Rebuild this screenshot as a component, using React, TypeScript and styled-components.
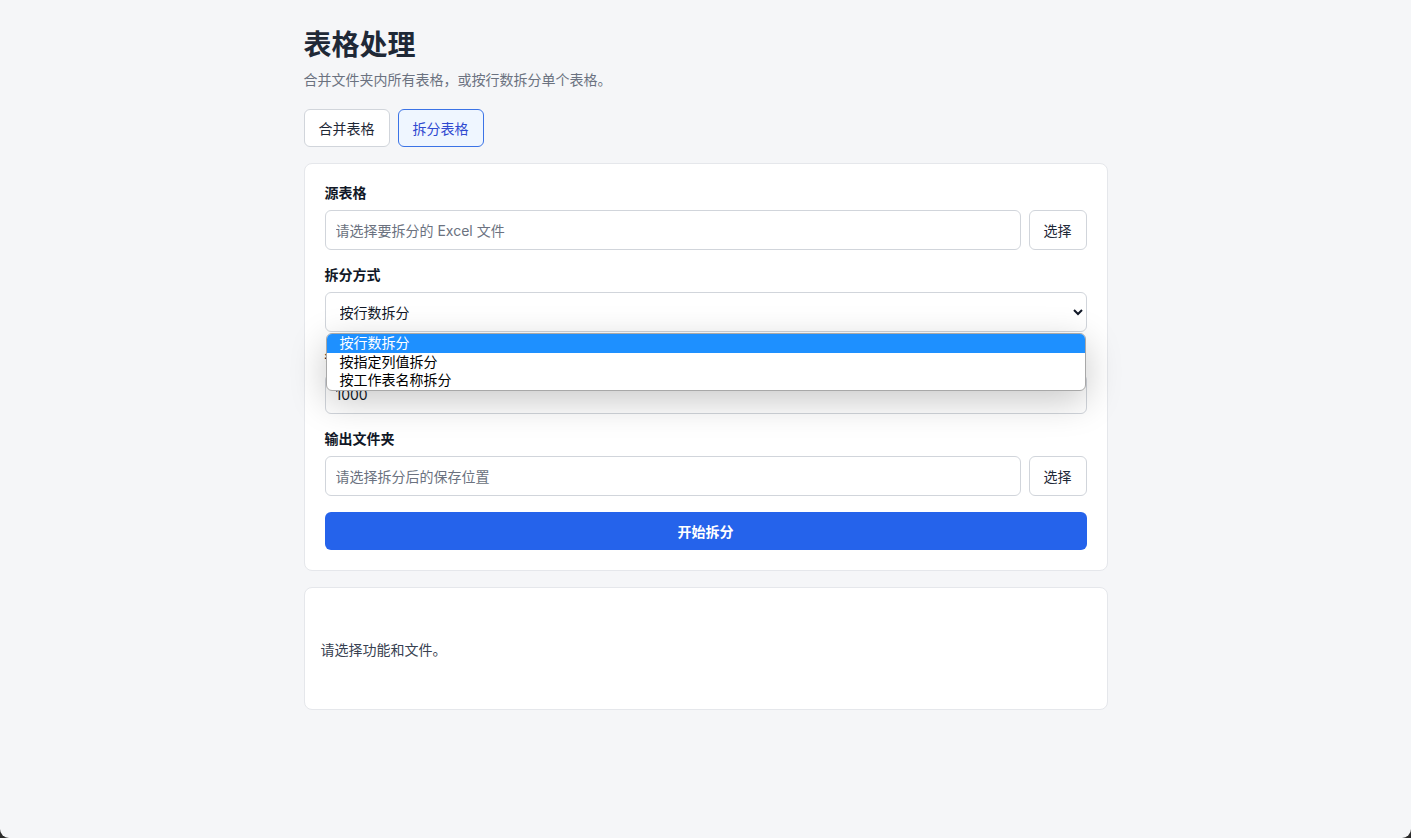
import { FC } from "react"
import styled, { createGlobalStyle } from "styled-components"

const GlobalStyle = createGlobalStyle`
  html {
    background: #2b2b2b;
  }
  body {
    margin: 0;
    font-family: "Inter", "Noto Sans CJK SC", sans-serif;
    color: #1f2937;
  }
  * {
    box-sizing: border-box;
  }
`

const Page = styled.div`
  min-height: 100vh;
  background: #f5f6f8;
  border-radius: 0 0 9px 9px;
  padding: 28px 0 40px;
`

const Container = styled.main`
  width: 804px;
  margin: 0 auto;
  display: flex;
  flex-direction: column;
`

const Title = styled.h1`
  margin: 0;
  font-size: 28px;
  line-height: 34px;
  font-weight: 700;
  color: #1f2937;
`

const Subtitle = styled.p`
  margin: 8px 0 0;
  font-size: 14px;
  line-height: 20px;
  color: #6b7280;
`

const Tabs = styled.div`
  display: flex;
  gap: 8px;
  margin-top: 19px;
`

const Tab = styled.button<{ $active?: boolean }>`
  height: 38px;
  padding: 0 14px;
  font: inherit;
  font-size: 14px;
  border-radius: 6px;
  cursor: pointer;
  border: 1px solid ${({ $active }) => ($active ? "#3b73e6" : "#d1d5db")};
  background: ${({ $active }) => ($active ? "#eff6ff" : "#ffffff")};
  color: ${({ $active }) => ($active ? "#2f49d0" : "#1f2937")};
`

const Card = styled.section`
  margin-top: 16px;
  background: #ffffff;
  border: 1px solid #e5e7eb;
  border-radius: 8px;
  padding: 20px;
  display: flex;
  flex-direction: column;
  gap: 16px;
`

const Field = styled.div`
  display: flex;
  flex-direction: column;
  gap: 8px;
`

const Label = styled.label`
  font-size: 14px;
  line-height: 18px;
  font-weight: 700;
  color: #111827;
`

const Row = styled.div`
  display: flex;
  gap: 8px;
`

const TextInput = styled.input`
  flex: 1;
  min-width: 0;
  height: 40px;
  padding: 0 10px;
  font: inherit;
  font-size: 14px;
  color: #111827;
  border: 1px solid #d1d5db;
  border-radius: 6px;
  background: #ffffff;
  outline: none;

  &::placeholder {
    color: #6b7280;
  }
`

const PickButton = styled.button`
  width: 58px;
  height: 40px;
  font: inherit;
  font-size: 14px;
  color: #1f2937;
  background: #ffffff;
  border: 1px solid #d1d5db;
  border-radius: 6px;
  cursor: pointer;
`

const SelectWrap = styled.div`
  position: relative;
`

const Select = styled.select`
  width: 100%;
  height: 40px;
  padding: 0 10px;
  font: inherit;
  font-size: 14px;
  color: #111827;
  background: #ffffff;
  border: 1px solid #d1d5db;
  border-radius: 6px;
  outline: none;
`

// open option list of the split-mode picker
const OptionList = styled.ul`
  position: absolute;
  top: calc(100% + 1px);
  left: 1px;
  right: 1px;
  margin: 0;
  padding: 0;
  list-style: none;
  background: #ffffff;
  border: 1px solid #a8a8a8;
  border-radius: 6px;
  overflow: hidden;
  box-shadow: 0 10px 36px rgba(0, 0, 0, 0.22);
  z-index: 10;
`

const Option = styled.li<{ $selected?: boolean }>`
  height: 18.5px;
  line-height: 18.5px;
  padding-left: 13px;
  font-size: 14px;
  color: ${({ $selected }) => ($selected ? "#ffffff" : "#000000")};
  background: ${({ $selected }) => ($selected ? "#1e90ff" : "transparent")};
`

const SubmitButton = styled.button`
  height: 38px;
  font: inherit;
  font-size: 14px;
  font-weight: 700;
  color: #ffffff;
  background: #2563eb;
  border: none;
  border-radius: 6px;
  cursor: pointer;
`

const StatusCard = styled.section`
  margin-top: 16px;
  min-height: 123px;
  background: #ffffff;
  border: 1px solid #e5e7eb;
  border-radius: 8px;
  padding: 16px;
  display: flex;
  align-items: center;
  font-size: 14px;
  color: #374151;
`

const splitModes = ["按行数拆分", "按指定列值拆分", "按工作表名称拆分"]

const App: FC = () => (
  <Page>
    <GlobalStyle />
    <Container>
      <Title>表格处理</Title>
      <Subtitle>合并文件夹内所有表格，或按行数拆分单个表格。</Subtitle>
      <Tabs>
        <Tab>合并表格</Tab>
        <Tab $active>拆分表格</Tab>
      </Tabs>

      <Card>
        <Field>
          <Label>源表格</Label>
          <Row>
            <TextInput placeholder="请选择要拆分的 Excel 文件" readOnly />
            <PickButton>选择</PickButton>
          </Row>
        </Field>

        <Field>
          <Label>拆分方式</Label>
          <SelectWrap>
            <Select defaultValue={splitModes[0]}>
              {splitModes.map((m) => (
                <option key={m}>{m}</option>
              ))}
            </Select>
            <OptionList>
              {splitModes.map((m, i) => (
                <Option key={m} $selected={i === 0}>
                  {m}
                </Option>
              ))}
            </OptionList>
          </SelectWrap>
        </Field>

        <Field>
          <Label>每份行数</Label>
          <Row>
            <TextInput defaultValue="1000" />
          </Row>
        </Field>

        <Field>
          <Label>输出文件夹</Label>
          <Row>
            <TextInput placeholder="请选择拆分后的保存位置" readOnly />
            <PickButton>选择</PickButton>
          </Row>
        </Field>

        <SubmitButton>开始拆分</SubmitButton>
      </Card>

      <StatusCard>请选择功能和文件。</StatusCard>
    </Container>
  </Page>
)

export default App
